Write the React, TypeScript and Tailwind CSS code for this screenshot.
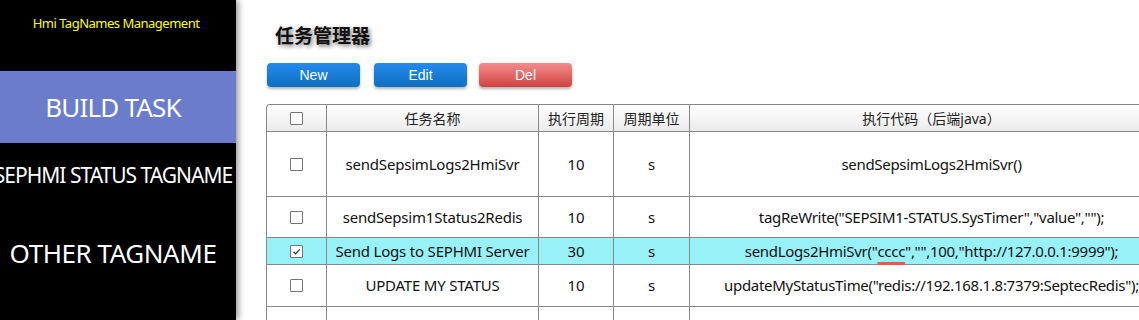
import React from "react";

const F = { fontFamily: '"Noto Sans", "Noto Sans CJK SC", sans-serif' };

function Check({ checked }: { checked?: boolean }) {
  return (
    <span className="inline-flex w-[13px] h-[13px] border border-[#767676] bg-white rounded-[1px] items-center justify-center">
      {checked && (
        <svg width="9" height="9" viewBox="0 0 9 9">
          <path d="M1.5 4.8 L3.6 6.8 L7.6 2.4" fill="none" stroke="#333" strokeWidth="1.2" />
        </svg>
      )}
    </span>
  );
}

type Row = { name: string; period: string; unit: string; code: React.ReactNode; h: string; hl?: boolean };

const rows: Row[] = [
  { name: "sendSepsimLogs2HmiSvr", period: "10", unit: "s", code: "sendSepsimLogs2HmiSvr()", h: "h-[65px]" },
  { name: "sendSepsim1Status2Redis", period: "10", unit: "s", code: 'tagReWrite("SEPSIM1-STATUS.SysTimer","value","");', h: "h-[41px]" },
  {
    name: "Send Logs to SEPHMI Server",
    period: "30",
    unit: "s",
    code: (
      <>
        sendLogs2HmiSvr("
        <span className="underline decoration-[#ee5555] decoration-[3px] underline-offset-[5px]">cccc</span>
        ","",100,"http://127.0.0.1:9999");
      </>
    ),
    h: "h-[27px]",
    hl: true,
  },
  { name: "UPDATE MY STATUS", period: "10", unit: "s", code: 'updateMyStatusTime("redis://192.168.1.8:7379:SeptecRedis");', h: "h-[42px]" },
];

export default function App() {
  return (
    <div className="w-[1139px] h-[320px] overflow-hidden flex bg-white" style={F}>
      <aside className="w-[236px] shrink-0 h-full bg-black relative z-10 overflow-hidden shadow-[2px_0_7px_rgba(0,0,0,0.45)]">
        <div className="w-[232px] h-[48px] flex items-center justify-center text-[13px] tracking-[-0.5px] text-[#ffff00] whitespace-nowrap">
          Hmi TagNames Management
        </div>
        <div className="h-[23px]" />
        <div className="w-[236px] h-[72px] bg-[#6a7cca] pr-[10px] flex items-center justify-center">
          <span className="text-[26px] tracking-[-0.8px] text-white whitespace-nowrap">BUILD TASK</span>
        </div>
        <div className="w-[226px] h-[65px] flex items-center justify-center">
          <span className="text-[21px] tracking-[-1px] text-white whitespace-nowrap">SEPHMI STATUS TAGNAME</span>
        </div>
        <div className="w-[226px] h-[91px] flex items-center justify-center">
          <span className="text-[26px] tracking-[-0.45px] text-white whitespace-nowrap">OTHER TAGNAME</span>
        </div>
      </aside>
      <main className="flex-1 pl-[30px] overflow-hidden">
        <div className="h-[24px]" />
        <div className="ml-[9px] h-[22px] flex items-center text-[19px] font-bold text-[#111] [text-shadow:2px_2px_4px_rgba(0,0,0,0.55)]" style={{ fontFamily: '"Noto Sans CJK SC", sans-serif' }}>
          任务管理器
        </div>
        <div className="h-[17px]" />
        <div className="flex ml-[1px]" style={{ fontFamily: '"Liberation Sans", Arial, sans-serif' }}>
          <button className="w-[93px] h-[24px] rounded-[4px] text-[14px] text-white bg-gradient-to-b from-[#238aee] to-[#0d70c0] shadow-[0_2px_3px_rgba(0,0,0,0.3)]">New</button>
          <button className="ml-[14px] w-[93px] h-[24px] rounded-[4px] text-[14px] text-white bg-gradient-to-b from-[#238aee] to-[#0d70c0] shadow-[0_2px_3px_rgba(0,0,0,0.3)]">Edit</button>
          <button className="ml-[12px] w-[93px] h-[24px] rounded-[4px] text-[14px] text-white bg-gradient-to-b from-[#f48c8c] to-[#cf4141] shadow-[0_2px_3px_rgba(0,0,0,0.3)]">Del</button>
        </div>
        <div className="h-[17px]" />
        <div className="w-[907px] border-l border-t border-[#888] rounded-tl-[4px] text-[#111]">
          <div className="flex h-[27px] border-b border-[#888] bg-gradient-to-b from-white to-[#ebebeb] rounded-tl-[4px] text-[14px] text-[#222]">
            <div className="w-[60px] border-r border-[#888] flex items-center justify-center"><Check /></div>
            <div className="w-[212px] border-r border-[#888] flex items-center justify-center">任务名称</div>
            <div className="w-[75px] border-r border-[#888] flex items-center justify-center">执行周期</div>
            <div className="w-[76px] border-r border-[#888] flex items-center justify-center">周期单位</div>
            <div className="flex-1 flex items-center justify-center">执行代码（后端java）</div>
          </div>
          {rows.map((r, i) => (
            <div key={i} className={`flex ${r.h} border-b border-[#888] text-[15px] tracking-[-0.2px] ${r.hl ? "bg-[#99f1f8]" : ""}`}>
              <div className="w-[60px] border-r border-[#888] flex items-center justify-center"><Check checked={r.hl} /></div>
              <div className="w-[212px] border-r border-[#888] flex items-center justify-center whitespace-nowrap">{r.name}</div>
              <div className="w-[75px] border-r border-[#888] flex items-center justify-center">{r.period}</div>
              <div className="w-[76px] border-r border-[#888] flex items-center justify-center">{r.unit}</div>
              <div className="flex-1 flex items-center justify-center whitespace-nowrap tracking-[-0.3px]">{r.code}</div>
            </div>
          ))}
          <div className="flex h-[40px]">
            <div className="w-[60px] border-r border-[#888]" />
            <div className="w-[212px] border-r border-[#888]" />
            <div className="w-[75px] border-r border-[#888]" />
            <div className="w-[76px] border-r border-[#888]" />
            <div className="flex-1" />
          </div>
        </div>
      </main>
    </div>
  );
}
